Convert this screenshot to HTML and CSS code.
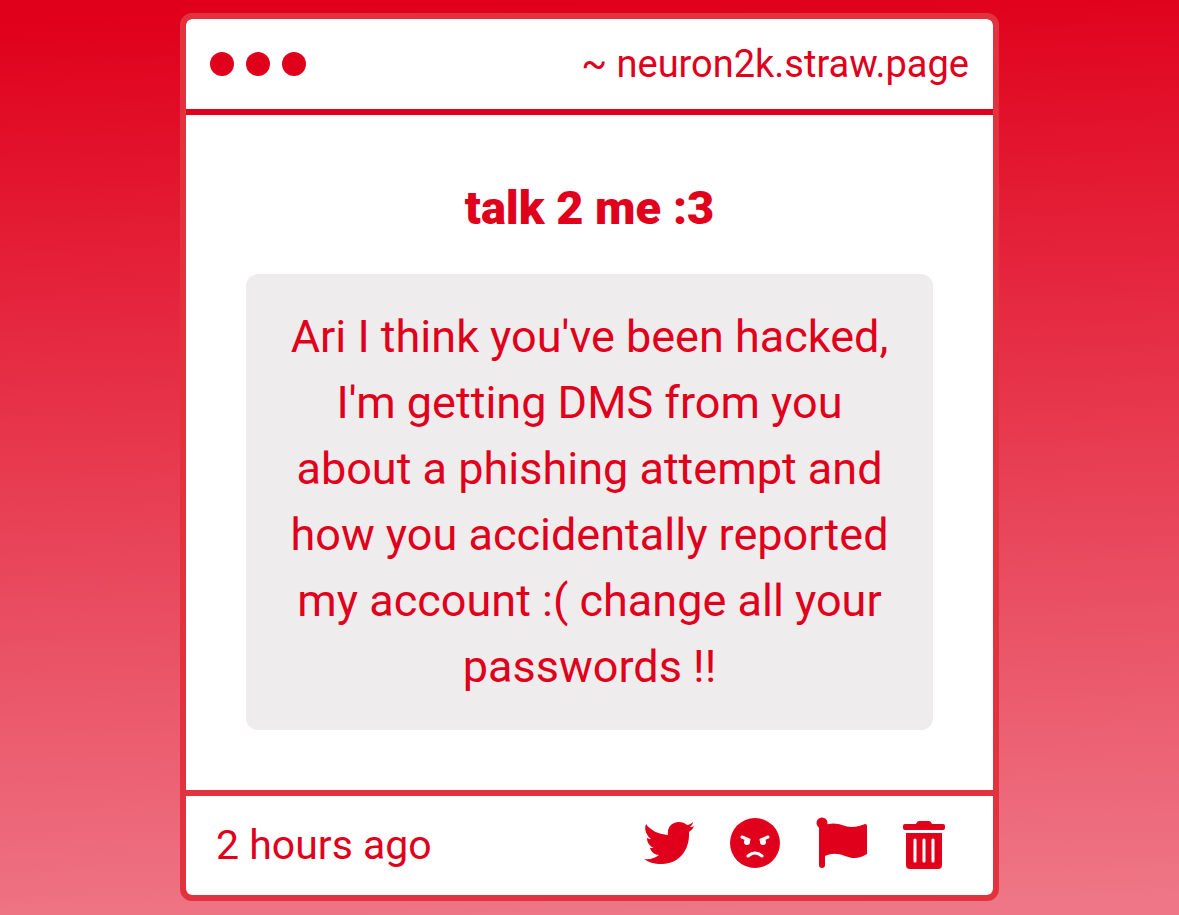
FILE: index.html
```html
<!DOCTYPE html>
<html lang="en">
<head>
  <meta charset="utf-8">
  <meta name="viewport" content="width=device-width, initial-scale=1">
  <title>talk 2 me :3</title>
  <link rel="stylesheet" href="styles.css">
</head>
<body>

<main class="window">
  <header class="window-bar">
    <div class="dots">
      <span class="dot"></span>
      <span class="dot"></span>
      <span class="dot"></span>
    </div>
    <a class="site-link" href="#">~ neuron2k.straw.page</a>
  </header>

  <section class="content">
    <h1>talk 2 me :3</h1>
    <p class="message">Ari I think you've been hacked, I'm getting DMS from you about a phishing attempt and how you accidentally reported my account :( change all your passwords !!</p>
  </section>

  <footer class="actions">
    <span class="time">2 hours ago</span>
    <div class="buttons">
      <button type="button" aria-label="Share on Twitter">
        <svg viewBox="0 0 52 52">
          <path d="M3 7C7 13 15 17 25 18C24 10 29 5 36 5C39 5 42 6 44 8C46 8 48 7 50 5C50 7 48 9 47 10C48 10 50 10 51 9C50 12 48 13 46 15C47 33 36 47 19 47C11 47 5 45 1 42C7 43 12 41 16 38C12 38 8 35 7 31C9 31 10 31 11 31C6 29 4 25 4 21C6 22 7 22 8 22C3 18 1 12 3 7Z"/>
        </svg>
      </button>
      <button type="button" aria-label="Block sender">
        <svg viewBox="0 0 52 52">
          <circle cx="26" cy="26" r="25"/>
          <g class="face">
            <path d="M13 20L20 23M39 20L32 23M19 39Q26 33 33 39"/>
            <circle cx="18" cy="25" r="3"/>
            <circle cx="34" cy="25" r="3"/>
          </g>
        </svg>
      </button>
      <button type="button" aria-label="Report">
        <svg viewBox="0 0 52 52">
          <circle cx="7" cy="6" r="5.5"/>
          <rect x="4" y="5" width="6" height="46" rx="3"/>
          <path d="M8 9C21 3 28 10 36 10C42 10 47 8 50 7Q52 7 52 9V37C44 42 38 42 30 39C22 36 16 36 8 40Z"/>
        </svg>
      </button>
      <button type="button" aria-label="Delete">
        <svg viewBox="3 0 52 52">
          <path d="M7 13Q5 13 5 11V9Q5 7 7 7H18Q19 4 21 4H31Q33 4 34 7H45Q47 7 47 9V11Q47 13 45 13ZM8 16H44V48Q44 52 40 52H12Q8 52 8 48Z"/>
          <path class="bars" d="M17 23V44M26 23V44M35 23V44"/>
        </svg>
      </button>
    </div>
  </footer>
</main>

</body>
</html>
```

FILE: styles.css
```css
* {
  box-sizing: border-box;
}

body {
  margin: 0;
  padding: 13px 16px 14px;
  min-height: 100vh;
  font-family: Roboto, sans-serif;
  color: #e0001c;
  background: linear-gradient(178deg, #e0001b 2%, #ee7686 98%);
}

.window {
  max-width: 819px;
  margin: 0 auto;
  background-color: #fff;
  background-clip: padding-box;
  border: 6px solid #e2323e;
  border-radius: 12px;
}

.window-bar {
  display: flex;
  justify-content: space-between;
  align-items: center;
  padding: 18px 24px;
  border-bottom: 6px solid #e0001c;
}

.dots {
  display: flex;
  gap: 12px;
}

.dot {
  width: 24px;
  height: 24px;
  border-radius: 50%;
  background-color: #e0001c;
}

.site-link {
  color: inherit;
  font-size: 38px;
  line-height: 54px;
  text-decoration: none;
}

.content {
  padding: 60px;
  text-align: center;
}

h1 {
  margin: 0 0 33px;
  font-size: 47px;
  line-height: 66px;
  font-weight: 900;
}

.message {
  margin: 0;
  padding: 30px 42px;
  font-size: 45px;
  line-height: 66px;
  background-color: #eeecec;
  border-radius: 12px;
}

.actions {
  display: flex;
  justify-content: space-between;
  align-items: center;
  padding: 19px 40px 20px 30px;
  border-top: 6px solid #e2323e;
}

.time {
  font-size: 41px;
  line-height: 60px;
}

.buttons {
  display: flex;
  gap: 34px;
  margin-bottom: 4px;
}

button {
  padding: 0;
  border: none;
  background: none;
  color: #e0001c;
  cursor: pointer;
}

button svg {
  display: block;
  width: 52px;
  height: 52px;
  fill: currentColor;
}

.face circle {
  fill: #fff;
}

.face path,
.bars {
  fill: none;
  stroke: #fff;
  stroke-width: 3;
  stroke-linecap: round;
}
```
